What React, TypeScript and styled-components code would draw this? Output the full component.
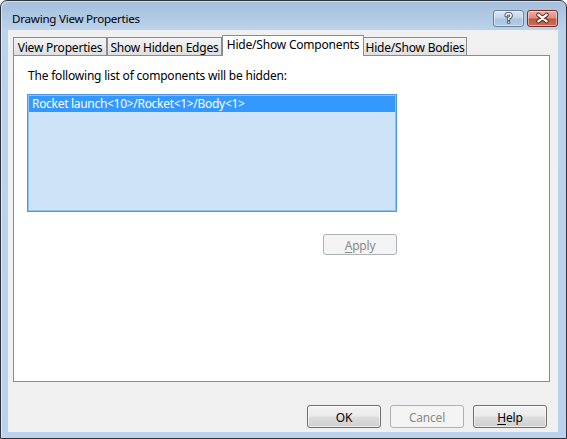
import React from 'react';
import styled, { createGlobalStyle } from 'styled-components';

const GlobalStyle = createGlobalStyle`
  html, body {
    margin: 0;
    padding: 0;
    background: #ffffff;
  }
  body {
    font-family: "Noto Sans", "Open Sans", sans-serif;
    font-size: 12px;
    letter-spacing: -0.2px;
    color: #000;
  }
  * { box-sizing: border-box; }
`;

const Window = styled.div`
  width: 567px;
  height: 439px;
  border: 1px solid #2f343c;
  border-radius: 7px 7px 0 0;
  background: linear-gradient(#a4bfdc 0px, #b4cce7 20px, #bcd3ec 29px, #bad2eb 100%);
  padding: 0 8px 6px 7px;
  display: flex;
  flex-direction: column;
  box-shadow: inset 1px 1px 0 rgba(255, 255, 255, 0.5);
`;

const TitleBar = styled.div`
  height: 29px;
  display: flex;
  align-items: flex-start;
  padding-top: 9px;
`;

const Title = styled.div`
  flex: 1;
  padding-left: 4px;
  line-height: 17px;
  font-size: 11.6px;
  letter-spacing: -0.25px;
  color: #000;
`;

const CaptionButton = styled.div<{ $close?: boolean }>`
  width: 31px;
  height: 17px;
  margin-left: 3px;
  border-radius: 3px;
  display: flex;
  align-items: center;
  justify-content: center;
  border: 1px solid ${({ $close }) => ($close ? '#7c2e25' : '#6a809e')};
  background: ${({ $close }) =>
    $close
      ? 'linear-gradient(#eab0a2 0%, #dc8c78 48%, #c8533f 52%, #c9705f 100%)'
      : 'linear-gradient(#dce7f3 0%, #c3d5e9 48%, #adc4de 52%, #b4cbe4 100%)'};
  box-shadow: inset 0 0 0 1px rgba(255, 255, 255, 0.45);
`;

const Client = styled.div`
  flex: 1;
  background: #f0f0f0;
  display: flex;
  flex-direction: column;
  padding: 5px 8px 4px 5px;
`;

const TabStrip = styled.div`
  height: 20px;
  display: flex;
  align-items: flex-end;
`;

const Tab = styled.div<{ $active?: boolean; $width: number; $overlap?: boolean }>`
  width: ${({ $width }) => $width}px;
  height: ${({ $active }) => ($active ? 21 : 18)}px;
  margin-left: ${({ $overlap }) => ($overlap ? -1 : 0)}px;
  margin-bottom: ${({ $active }) => ($active ? -1 : 0)}px;
  position: relative;
  z-index: ${({ $active }) => ($active ? 2 : 1)};
  border: 1px solid #898c95;
  border-bottom: none;
  background: ${({ $active }) =>
    $active ? '#ffffff' : 'linear-gradient(#f3f3f3 0%, #ebebeb 50%, #dedede 100%)'};
  text-align: center;
  line-height: 17px;
  padding-top: ${({ $active }) => ($active ? 0 : 1)}px;
  font-size: 12px;
  white-space: nowrap;
  color: #000;
`;

const Panel = styled.div`
  height: 327px;
  background: #ffffff;
  border: 1px solid #898c95;
  padding: 12px 14px;
  display: flex;
  flex-direction: column;
`;

const Label = styled.div`
  line-height: 15px;
  font-size: 12px;
`;

const ListBox = styled.div`
  width: 370px;
  height: 118px;
  margin-top: 11px;
  margin-left: -1px;
  border: 1px solid #4f97e3;
  box-shadow: inset 0 0 0 1px #8fc3f2;
  background: #cde4f8;
  padding: 1px;
`;

const ListItem = styled.div<{ $selected?: boolean }>`
  height: 16px;
  line-height: 15px;
  padding-left: 3px;
  font-size: 12px;
  letter-spacing: -0.3px;
  background: ${({ $selected }) => ($selected ? '#3399ff' : 'transparent')};
  color: ${({ $selected }) => ($selected ? '#ffffff' : '#000000')};
  white-space: nowrap;
`;

const ApplyRow = styled.div`
  width: 369px;
  display: flex;
  justify-content: flex-end;
  margin-top: 22px;
`;

const Button = styled.div<{ $disabled?: boolean; $w?: number; $h?: number }>`
  width: ${({ $w }) => $w ?? 74}px;
  height: ${({ $h }) => $h ?? 23}px;
  border-radius: 3px;
  display: flex;
  align-items: center;
  justify-content: center;
  padding-top: 1px;
  font-size: 12px;
  border: 1px solid ${({ $disabled }) => ($disabled ? '#adb2b5' : '#707070')};
  background: ${({ $disabled }) =>
    $disabled
      ? '#f4f4f4'
      : 'linear-gradient(#f2f2f2 0%, #ebebeb 48%, #dddddd 52%, #cfcfcf 100%)'};
  color: ${({ $disabled }) => ($disabled ? '#8a8a8a' : '#000000')};
  box-shadow: ${({ $disabled }) =>
    $disabled ? 'none' : 'inset 0 0 0 1px rgba(255, 255, 255, 0.6)'};

  u {
    text-decoration: underline;
    text-underline-offset: 2px;
  }
`;

const ButtonRow = styled.div`
  flex: 1;
  display: flex;
  justify-content: flex-end;
  align-items: flex-end;
  gap: 9px;
  padding-right: 3px;
`;

const HelpGlyph = () => (
  <svg width="31" height="17" viewBox="0 0 31 17">
    <g fill="none" strokeLinecap="round" strokeLinejoin="round">
      <path
        d="M13 5.6 Q13 3.3 15.6 3.3 Q18.3 3.3 18.3 5.6 Q18.3 7.2 15.6 8.2 V9.6"
        stroke="#3f4d60"
        strokeWidth="3.6"
      />
      <path
        d="M13 5.6 Q13 3.3 15.6 3.3 Q18.3 3.3 18.3 5.6 Q18.3 7.2 15.6 8.2 V9.6"
        stroke="#ffffff"
        strokeWidth="1.7"
      />
    </g>
    <circle cx="15.6" cy="12.6" r="1.8" fill="#3f4d60" />
    <circle cx="15.6" cy="12.6" r="0.9" fill="#ffffff" />
  </svg>
);

const CloseGlyph = () => (
  <svg width="31" height="17" viewBox="0 0 31 17">
    <g strokeLinecap="round">
      <path d="M11 4.5 L20 11.5 M20 4.5 L11 11.5" stroke="#4a201a" strokeWidth="4.4" />
      <path d="M11 4.5 L20 11.5 M20 4.5 L11 11.5" stroke="#ffffff" strokeWidth="2.4" />
    </g>
  </svg>
);

const tabs = [
  { label: 'View Properties', width: 94 },
  { label: 'Show Hidden Edges', width: 115 },
  { label: 'Hide/Show Components', width: 142, active: true },
  { label: 'Hide/Show Bodies', width: 104, overlap: true },
];

export default function App() {
  return (
    <>
      <GlobalStyle />
      <Window>
        <TitleBar>
          <Title>Drawing View Properties</Title>
          <CaptionButton>
            <HelpGlyph />
          </CaptionButton>
          <CaptionButton $close>
            <CloseGlyph />
          </CaptionButton>
        </TitleBar>
        <Client>
          <TabStrip>
            {tabs.map((t) => (
              <Tab key={t.label} $width={t.width} $active={t.active} $overlap={t.overlap}>
                {t.label}
              </Tab>
            ))}
          </TabStrip>
          <Panel>
            <Label>The following list of components will be hidden:</Label>
            <ListBox>
              <ListItem $selected>Rocket launch&lt;10&gt;/Rocket&lt;1&gt;/Body&lt;1&gt;</ListItem>
            </ListBox>
            <ApplyRow>
              <Button $disabled $w={74} $h={21}>
                <span>
                  <u>A</u>pply
                </span>
              </Button>
            </ApplyRow>
          </Panel>
          <ButtonRow>
            <Button>OK</Button>
            <Button $disabled>Cancel</Button>
            <Button>
              <span>
                <u>H</u>elp
              </span>
            </Button>
          </ButtonRow>
        </Client>
      </Window>
    </>
  );
}
